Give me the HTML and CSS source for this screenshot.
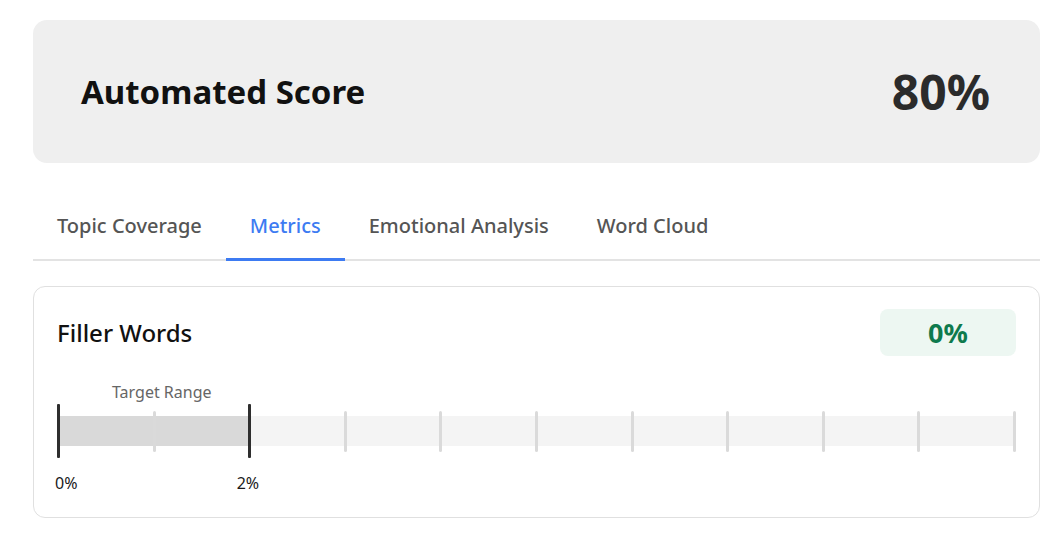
FILE: index.html
```html
<!DOCTYPE html>
<html lang="en">
<head>
<meta charset="utf-8">
<title>Automated Score</title>
<link rel="stylesheet" href="styles.css">
</head>
<body>
<main class="page">
  <section class="score-card">
    <h1 class="score-title">Automated Score</h1>
    <div class="score-value">80%</div>
  </section>

  <nav class="tabs">
    <div class="tab">Topic Coverage</div>
    <div class="tab active">Metrics</div>
    <div class="tab">Emotional Analysis</div>
    <div class="tab">Word Cloud</div>
  </nav>

  <section class="metric-card">
    <div class="metric-head">
      <h2 class="metric-title">Filler Words</h2>
      <div class="metric-badge">0%</div>
    </div>
    <div class="target-label">Target Range</div>
    <div class="scale">
      <div class="track">
        <div class="range" style="width: 20%"></div>
        <span class="tick dark"></span>
        <span class="tick"></span>
        <span class="tick dark"></span>
        <span class="tick"></span>
        <span class="tick"></span>
        <span class="tick"></span>
        <span class="tick"></span>
        <span class="tick"></span>
        <span class="tick"></span>
        <span class="tick"></span>
        <span class="tick"></span>
      </div>
    </div>
    <div class="scale-labels">
      <span class="scale-label first">0%</span>
      <span class="scale-label" style="left: 20%">2%</span>
    </div>
  </section>
</main>
</body>
</html>
```
FILE: styles.css
```css
* { box-sizing: border-box; }

html, body {
  margin: 0;
  padding: 0;
  background: #ffffff;
}

body {
  font-family: "Noto Sans", "Open Sans", "Liberation Sans", sans-serif;
  color: #111;
}

.page {
  width: 1007px;
  margin: 20px 0 0 33px;
}

.score-card {
  height: 143px;
  background: #efefef;
  border-radius: 14px;
  display: flex;
  align-items: center;
  justify-content: space-between;
  padding: 0 50px 0 48px;
}

.score-title {
  margin: 0;
  font-size: 33px;
  font-weight: 700;
  color: #111;
}

.score-value {
  font-size: 48px;
  font-weight: 700;
  color: #2b2b2b;
}

.tabs {
  display: flex;
  margin-top: 37px;
  border-bottom: 2px solid #e3e3e3;
}

.tab {
  padding: 0 24px;
  height: 61px;
  line-height: 52px;
  font-size: 20px;
  font-weight: 500;
  color: #555;
  border-bottom: 3px solid transparent;
  margin-bottom: -2px;
}

.tab.active {
  color: #3d7bf2;
  border-bottom-color: #3d7bf2;
}

.metric-card {
  margin-top: 25px;
  border: 1px solid #e0e0e0;
  border-radius: 12px;
  padding: 22px 23px 23px 23px;
}

.metric-head {
  display: flex;
  align-items: center;
  justify-content: space-between;
}

.metric-title {
  margin: 0;
  font-size: 24px;
  font-weight: 500;
  color: #111;
}

.metric-badge {
  width: 136px;
  height: 47px;
  border-radius: 8px;
  background: #edf7f2;
  color: #0e7a4d;
  font-size: 27px;
  font-weight: 700;
  display: flex;
  align-items: center;
  justify-content: center;
}

.target-label {
  margin: 25px 0 0 55px;
  font-size: 16px;
  line-height: 22px;
  color: #666;
}

.scale {
  margin-top: 1px;
  height: 54px;
  display: flex;
  align-items: center;
}

.track {
  position: relative;
  width: 100%;
  height: 30px;
  background: #f4f4f4;
  display: flex;
  align-items: center;
  justify-content: space-between;
}

.range {
  position: absolute;
  left: 0;
  top: 0;
  bottom: 0;
  background: #d9d9d9;
}

.tick {
  position: relative;
  width: 3px;
  height: 41px;
  background: #dadada;
  border-radius: 2px;
  flex: none;
}

.tick.dark {
  height: 54px;
  background: #2e2e2e;
  border-radius: 1px;
}

.scale-labels {
  position: relative;
  margin-top: 14px;
  height: 22px;
}

.scale-label {
  position: absolute;
  top: 0;
  font-size: 16px;
  line-height: 22px;
  color: #1a1a1a;
  transform: translateX(-54%);
}

.scale-label.first {
  left: -2px;
  transform: none;
}
```
